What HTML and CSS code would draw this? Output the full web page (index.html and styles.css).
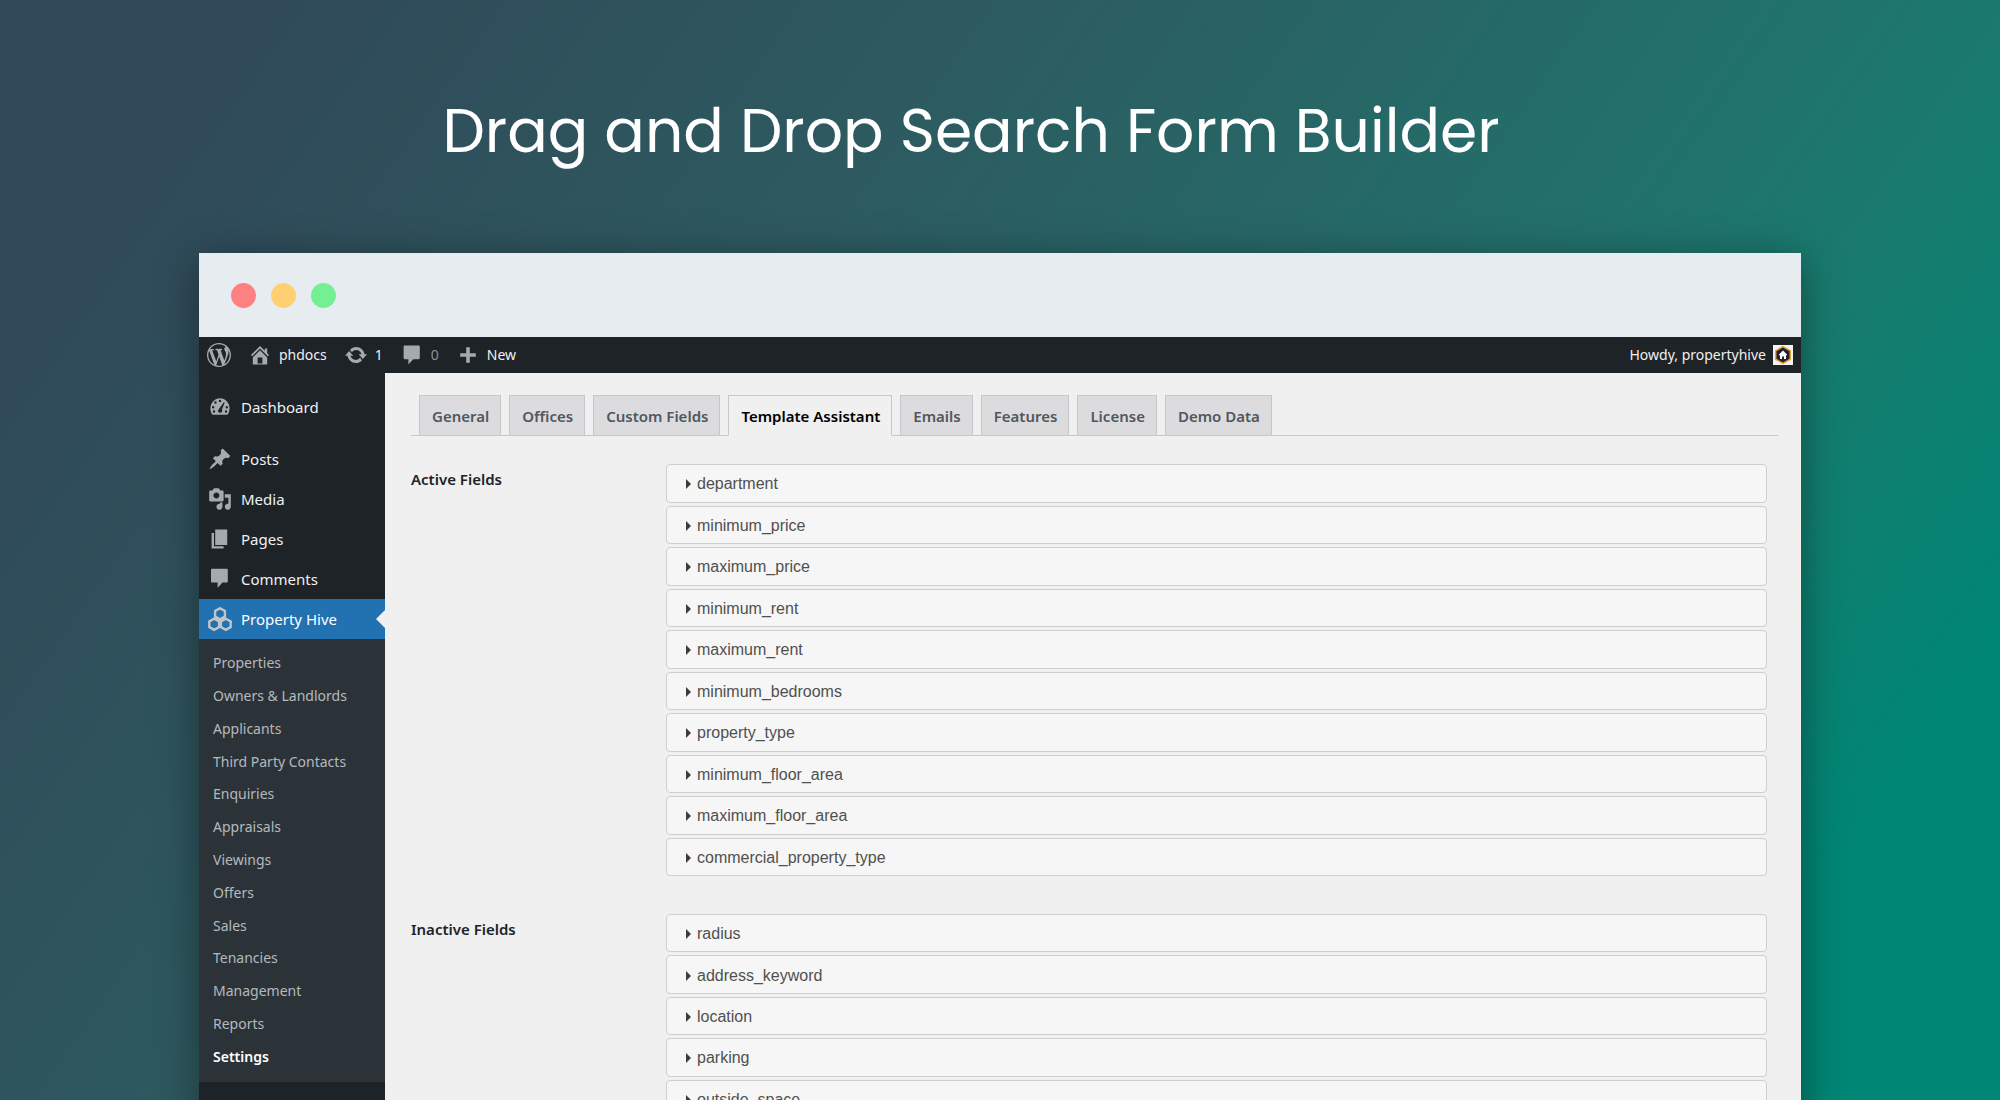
FILE: index.html
```html
<!DOCTYPE html>
<html lang="en">
<head>
<meta charset="utf-8">
<meta name="viewport" content="width=device-width, initial-scale=1">
<title>Drag and Drop Search Form Builder</title>
<link rel="stylesheet" href="styles.css">
</head>
<body>
<header class="hero">
  <h1 class="hero-title">Drag and Drop Search Form Builder</h1>
</header>

<div class="window">
  <div class="titlebar">
    <span class="dot dot-red"></span>
    <span class="dot dot-yellow"></span>
    <span class="dot dot-green"></span>
  </div>

  <nav class="adminbar" aria-label="Toolbar">
    <a class="bar-item" href="#" aria-label="About WordPress">
      <svg class="icon" viewBox="0 0 20 20"><path d="M20 10c0-5.51-4.49-10-10-10C4.48 0 0 4.49 0 10c0 5.52 4.48 10 10 10 5.51 0 10-4.48 10-10zM7.78 15.37L4.37 6.22c.55-.02 1.17-.08 1.17-.08.5-.06.44-1.13-.06-1.11 0 0-1.45.11-2.37.11-.18 0-.37 0-.58-.01C4.12 2.69 6.87 1.11 10 1.11c2.33 0 4.45.87 6.05 2.34-.68-.11-1.65.39-1.65 1.58 0 .74.45 1.36.9 2.1.35.61.55 1.36.55 2.46 0 1.49-1.4 5-1.4 5l-3.03-8.37c.54-.02.82-.17.82-.17.5-.05.44-1.25-.06-1.22 0 0-1.44.12-2.38.12-.87 0-2.33-.12-2.33-.12-.5-.03-.56 1.2-.06 1.22l.92.08 1.26 3.41zM17.41 10c.24-.64.74-1.87.43-4.25.7 1.29 1.05 2.71 1.05 4.25 0 3.29-1.73 6.24-4.4 7.78.97-2.59 1.94-5.2 2.92-7.78zM6.1 18.09C3.12 16.65 1.11 13.53 1.11 10c0-1.3.23-2.48.72-3.59C3.25 10.3 4.67 14.2 6.1 18.09zm4.03-6.63l2.58 6.98c-.86.29-1.76.45-2.71.45-.79 0-1.57-.11-2.29-.33.81-2.38 1.62-4.74 2.42-7.1z"/></svg>
    </a>
    <a class="bar-item" href="#">
      <svg class="icon" viewBox="0 0 20 20"><path d="M16 8.5l1.53 1.53-1.06 1.06L10 4.6l-6.47 6.49-1.06-1.06L10 2.5l4 4v-2h2v4zm-6-2.46l6 5.99V18H4v-5.97zM12 17v-5H8v5h4z"/></svg>
      <span>phdocs</span>
    </a>
    <a class="bar-item" href="#">
      <svg class="icon" viewBox="0 0 20 20"><path d="M10.2 3.28c3.53 0 6.43 2.61 6.92 6h2.08l-3.5 4-3.5-4h2.32c-.45-1.97-2.21-3.45-4.32-3.45-1.45 0-2.73.71-3.54 1.78L4.95 5.66C6.23 4.2 8.11 3.28 10.2 3.28zm-.4 13.44c-3.52 0-6.43-2.61-6.92-6H.8l3.5-4c1.17 1.33 2.33 2.67 3.5 4H5.48c.45 1.97 2.21 3.45 4.32 3.45 1.45 0 2.73-.71 3.54-1.78l1.71 1.95c-1.28 1.46-3.15 2.38-5.25 2.38z"/></svg>
      <span>1</span>
    </a>
    <a class="bar-item" href="#">
      <svg class="icon" viewBox="0 0 20 20"><path d="M4 2h11.500c.6 0 1 .4 1 1v9.500c0 .6-.4 1-1 1H11l-4 4.500v-4.500H4c-.6 0-1-.4-1-1V3c0-.6.4-1 1-1z"/></svg>
      <span class="count-zero">0</span>
    </a>
    <a class="bar-item" href="#">
      <svg class="icon" viewBox="0 0 20 20"><path d="M16.500 8.500v3h-5v5h-3v-5h-5v-3h5v-5h3v5h5z"/></svg>
      <span>New</span>
    </a>
    <a class="bar-item bar-account" href="#">
      <span>Howdy, propertyhive</span>
      <svg class="avatar" viewBox="0 0 20 20"><path fill="#f4f4f4" d="M0 0h20v20H0z"/><path fill="#1f2330" stroke="#e8a33b" stroke-width="1.5" d="M10 1.6l7.3 4.2v8.4L10 18.4l-7.3-4.2V5.800z"/><path fill="#fff" d="M10 5.500l4.200 4.200-.7.700-.5-.4V14h-2v-2.500H9V14H7v-4l-.5.400-.7-.700z"/></svg>
    </a>
  </nav>

  <div class="workspace">
    <nav class="sidebar" aria-label="Main menu">
      <a class="menu-item menu-first" href="#">
        <svg class="icon" viewBox="0 0 20 20"><path fill-rule="evenodd" d="M3.760 16.500h12.480A8.600 8.600 0 0 0 18 11.200C18 6.600 14.420 2.700 10 2.700S2 6.600 2 11.200c0 2 .66 3.830 1.760 5.300zM10 3.900a1 1 0 1 1 0 2 1 1 0 0 1 0-2zM6.200 5.300a1 1 0 1 1 0 2 1 1 0 0 1 0-2zM13.200 6l.7.400-2.300 5.600c.8 1.500-.1 2.800-1.500 2.800s-2.300-1.500-1.300-2.700zM4.300 9.200a1 1 0 1 1 0 2 1 1 0 0 1 0-2zM15.700 9.200a1 1 0 1 1 0 2 1 1 0 0 1 0-2zM5 12.800a1 1 0 1 1 0 2 1 1 0 0 1 0-2zM15 12.800a1 1 0 1 1 0 2 1 1 0 0 1 0-2z"/></svg>
        <span>Dashboard</span>
      </a>
      <a class="menu-item" href="#">
        <svg class="icon" viewBox="0 0 20 20"><path d="M10.44 3.02l1.82-1.82 6.36 6.35-1.83 1.82c-1.05-.68-2.48-.57-3.41.36l-.75.75c-.92.93-1.04 2.35-.35 3.41l-1.83 1.82-2.41-2.41-2.8 2.79c-.42.42-3.38 2.71-3.8 2.29s1.860-3.390 2.280-3.810l2.790-2.790L4.100 9.360l1.830-1.820c1.050.69 2.480.57 3.400-.36l.75-.75c.93-.92 1.050-2.350.36-3.410z"/></svg>
        <span>Posts</span>
      </a>
      <a class="menu-item" href="#">
        <svg class="icon" viewBox="0 0 20 20"><path d="M13 11V4c0-.55-.45-1-1-1h-1.67L9 1H5L3.67 3H2c-.55 0-1 .45-1 1v7c0 .55.45 1 1 1h10c.55 0 1-.45 1-1zM7 4.500c1.380 0 2.500 1.120 2.500 2.500S8.380 9.500 7 9.500 4.500 8.380 4.500 7 5.620 4.500 7 4.500zM14 6h5v10.500c0 1.380-1.120 2.500-2.500 2.500S14 17.880 14 16.500s1.120-2.500 2.500-2.500c.17 0 .34.02.5.05V9h-3V6zm-4 8.050V13h2v3.500c0 1.380-1.120 2.500-2.500 2.500S7 17.880 7 16.500 8.120 14 9.500 14c.17 0 .34.02.5.05z"/></svg>
        <span>Media</span>
      </a>
      <a class="menu-item" href="#">
        <svg class="icon" viewBox="0 0 20 20"><path d="M6 15V2h10v13H6zm-1 1h8v2H3V5h2v11z"/></svg>
        <span>Pages</span>
      </a>
      <a class="menu-item" href="#">
        <svg class="icon" viewBox="0 0 20 20"><path d="M3.500 1.500h12c.6 0 1 .4 1 1V12c0 .6-.4 1-1 1H12l-4 4.500V13H3.500c-.6 0-1-.4-1-1V2.500c0-.6.4-1 1-1z"/></svg>
        <span>Comments</span>
      </a>
      <a class="menu-item menu-current" href="#">
        <svg class="icon icon-hive" viewBox="0 0 24 24"><path d="M12 1.200l4.900 2.800v5.600L12 12.400 7.100 9.600V4zM6.200 11.700l4.900 2.800v5.600l-4.900 2.800-4.900-2.800v-5.600zM17.800 11.700l4.900 2.800v5.600l-4.900 2.800-4.900-2.800v-5.600z"/></svg>
        <span>Property Hive</span>
      </a>
      <div class="submenu">
        <a href="#">Properties</a>
        <a href="#">Owners &amp; Landlords</a>
        <a href="#">Applicants</a>
        <a href="#">Third Party Contacts</a>
        <a href="#">Enquiries</a>
        <a href="#">Appraisals</a>
        <a href="#">Viewings</a>
        <a href="#">Offers</a>
        <a href="#">Sales</a>
        <a href="#">Tenancies</a>
        <a href="#">Management</a>
        <a href="#">Reports</a>
        <a class="submenu-current" href="#">Settings</a>
      </div>
    </nav>

    <main class="content">
      <nav class="tabs" aria-label="Settings sections">
        <a class="tab" href="#">General</a>
        <a class="tab" href="#">Offices</a>
        <a class="tab" href="#">Custom Fields</a>
        <a class="tab tab-active" href="#" aria-current="page">Template Assistant</a>
        <a class="tab" href="#">Emails</a>
        <a class="tab" href="#">Features</a>
        <a class="tab" href="#">License</a>
        <a class="tab" href="#">Demo Data</a>
      </nav>

      <section class="field-group">
        <h2 class="group-title">Active Fields</h2>
        <div class="field-list field-list-active">
          <button class="field" type="button">department</button>
          <button class="field" type="button">minimum_price</button>
          <button class="field" type="button">maximum_price</button>
          <button class="field" type="button">minimum_rent</button>
          <button class="field" type="button">maximum_rent</button>
          <button class="field" type="button">minimum_bedrooms</button>
          <button class="field" type="button">property_type</button>
          <button class="field" type="button">minimum_floor_area</button>
          <button class="field" type="button">maximum_floor_area</button>
          <button class="field" type="button">commercial_property_type</button>
        </div>
      </section>

      <section class="field-group">
        <h2 class="group-title">Inactive Fields</h2>
        <div class="field-list field-list-inactive">
          <button class="field" type="button">radius</button>
          <button class="field" type="button">address_keyword</button>
          <button class="field" type="button">location</button>
          <button class="field" type="button">parking</button>
          <button class="field" type="button">outside_space</button>
        </div>
      </section>
    </main>
  </div>
</div>
</body>
</html>
```
FILE: styles.css
```css
* {
  box-sizing: border-box;
}

body {
  display: flex;
  flex-direction: column;
  height: 100vh;
  margin: 0;
  overflow: hidden;
  font-family: "Segoe UI", "Noto Sans", sans-serif;
  font-size: 15px;
  line-height: 20px;
  background: linear-gradient(125deg, #304858 8%, #2d5a60 35%, #22716b 64%, #187b6e 74%, #008674 88%);
}

a {
  color: inherit;
  text-decoration: none;
}

/* Heading */

.hero {
  flex: none;
  height: 253px;
  padding: 86px 58px 0 0;
}

.hero-title {
  margin: 0;
  color: #fff;
  font-family: Poppins, Inter, sans-serif;
  font-size: 60px;
  font-weight: 400;
  line-height: 90px;
  text-align: center;
}

/* Browser window */

.window {
  flex: 1 0 auto;
  display: flex;
  flex-direction: column;
  margin: 0 199px;
  background: #f0f0f1;
  box-shadow: 0 8px 40px rgba(0, 0, 0, 0.4);
}

.titlebar {
  display: flex;
  align-items: center;
  gap: 15px;
  height: 84px;
  padding: 0 32px;
  background: #e6ecf0;
}

.dot {
  width: 25px;
  height: 25px;
  border-radius: 50%;
}

.dot-red {
  background: #ff8080;
}

.dot-yellow {
  background: #ffd072;
}

.dot-green {
  background: #74f094;
}

/* Toolbar */

.adminbar {
  display: flex;
  align-items: center;
  gap: 17px;
  height: 36px;
  padding: 0 8px;
  color: #f0f0f1;
  font-size: 14px;
  background: #1d2327;
}

.bar-item {
  display: flex;
  align-items: center;
  gap: 7px;
}

.bar-account {
  margin-left: auto;
}

.count-zero {
  color: #8c8f94;
}

.icon {
  flex: none;
  width: 24px;
  height: 24px;
  fill: #a7aaad;
}

.avatar {
  width: 20px;
  height: 20px;
}

.workspace {
  flex: 1;
  display: flex;
}

/* Main menu */

.sidebar {
  flex: none;
  width: 186px;
  padding-top: 14px;
  color: #f0f0f1;
  background: #1d2327;
}

.menu-item {
  display: flex;
  align-items: center;
  gap: 9px;
  height: 40px;
  padding-left: 9px;
}

.menu-first {
  margin-bottom: 12px;
}

.menu-current {
  position: relative;
  color: #fff;
  background: #2271b1;
}

.menu-current::after {
  content: "";
  position: absolute;
  top: 11px;
  right: 0;
  border: 9px solid transparent;
  border-left: 0;
  border-right-color: #f0f0f1;
}

.icon-hive {
  fill: none;
  stroke: #c3c4c7;
  stroke-width: 2.4;
}

.submenu {
  display: grid;
  grid-auto-rows: 1fr;
  align-items: center;
  height: 443px;
  padding: 8px 14px 9px;
  color: #b4b9be;
  font-size: 14px;
  background: #2c3338;
}

.submenu-current {
  color: #fff;
  font-weight: 600;
}

/* Settings page */

.content {
  flex: 1;
  padding: 22px 23px 0 26px;
}

.tabs {
  display: flex;
  gap: 8px;
  padding-left: 8px;
  border-bottom: 1px solid #c6c7ca;
}

.tab {
  height: 41px;
  margin-bottom: -1px;
  padding: 0 11px 0 12px;
  border: 1px solid #c6c7ca;
  color: #50575e;
  font-weight: 600;
  line-height: 40px;
  background: #dcdcde;
}

.tab-active {
  border-bottom-color: #f0f0f1;
  color: #000;
  background: #f0f0f1;
}

.field-group {
  display: grid;
  grid-template-columns: 255px 1fr;
  align-items: start;
  padding: 28px 11px 10px 0;
}

.group-title {
  margin: 5px 0 0;
  color: #1d2327;
  font-size: 15px;
  font-weight: 600;
  line-height: 20px;
}

.field-list {
  display: grid;
  grid-auto-rows: 1fr;
  gap: 3px;
}

.field-list-active {
  min-height: 412px;
}

.field-list-inactive {
  min-height: 204px;
}

.field {
  display: flex;
  align-items: center;
  gap: 6px;
  padding: 2px 19px 0;
  border: 1px solid #cfcfcf;
  border-radius: 4px;
  color: #50504f;
  font-family: Arial, "Liberation Sans", sans-serif;
  font-size: 16px;
  text-align: left;
  background: #f6f6f6;
}

.field::before {
  content: "";
  border: 5px solid transparent;
  border-left-color: #3c3c3c;
  border-right: 0;
}
```
